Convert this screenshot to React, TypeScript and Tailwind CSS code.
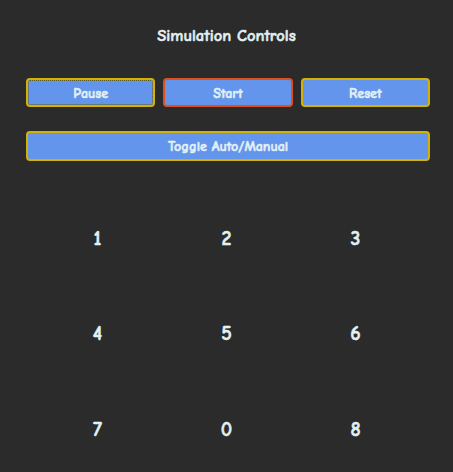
export default function App() {
  const digits = ["1", "2", "3", "4", "5", "6", "7", "0", "8"];

  return (
    <div
      className="min-h-[472px] w-full bg-[#2b2b2b] text-[#e2f1f4] [-webkit-text-stroke:0.5px_#e2f1f4]"
      style={{ fontFamily: '"Comic Sans MS", "Comic Neue", Lato, sans-serif' }}
    >
      <h1 className="pt-[26px] text-center text-[16.5px] font-bold leading-[20px]">
        Simulation Controls
      </h1>

      <div className="mt-[32px] ml-[26px] mr-[23px] grid grid-cols-3 gap-[8px]">
        <button className="h-[29px] rounded-[4px] border-2 border-[#d4b106] bg-[#6495ed] pt-px text-[14px] font-bold text-[#e2f1f4] outline-1 outline-dotted outline-[#5a5a30] outline-offset-[-3px]">
          Pause
        </button>
        <button className="h-[29px] rounded-[4px] border-2 border-[#e0501c] bg-[#6495ed] pt-px text-[14px] font-bold text-[#e2f1f4]">
          Start
        </button>
        <button className="h-[29px] rounded-[4px] border-2 border-[#d4b106] bg-[#6495ed] pt-px text-[14px] font-bold text-[#e2f1f4]">
          Reset
        </button>
      </div>

      <div className="mt-[24px] ml-[26px] mr-[23px]">
        <button className="h-[30px] w-full rounded-[4px] border-2 border-[#d4b106] bg-[#6495ed] pt-px text-[14px] font-bold text-[#e2f1f4]">
          Toggle Auto/Manual
        </button>
      </div>

      <div className="mx-[33px] mt-[30px] grid grid-cols-3">
        {digits.map((d) => (
          <div
            key={d}
            className="flex h-[95.5px] items-center justify-center text-[20px] font-bold"
          >
            {d}
          </div>
        ))}
      </div>
    </div>
  );
}
